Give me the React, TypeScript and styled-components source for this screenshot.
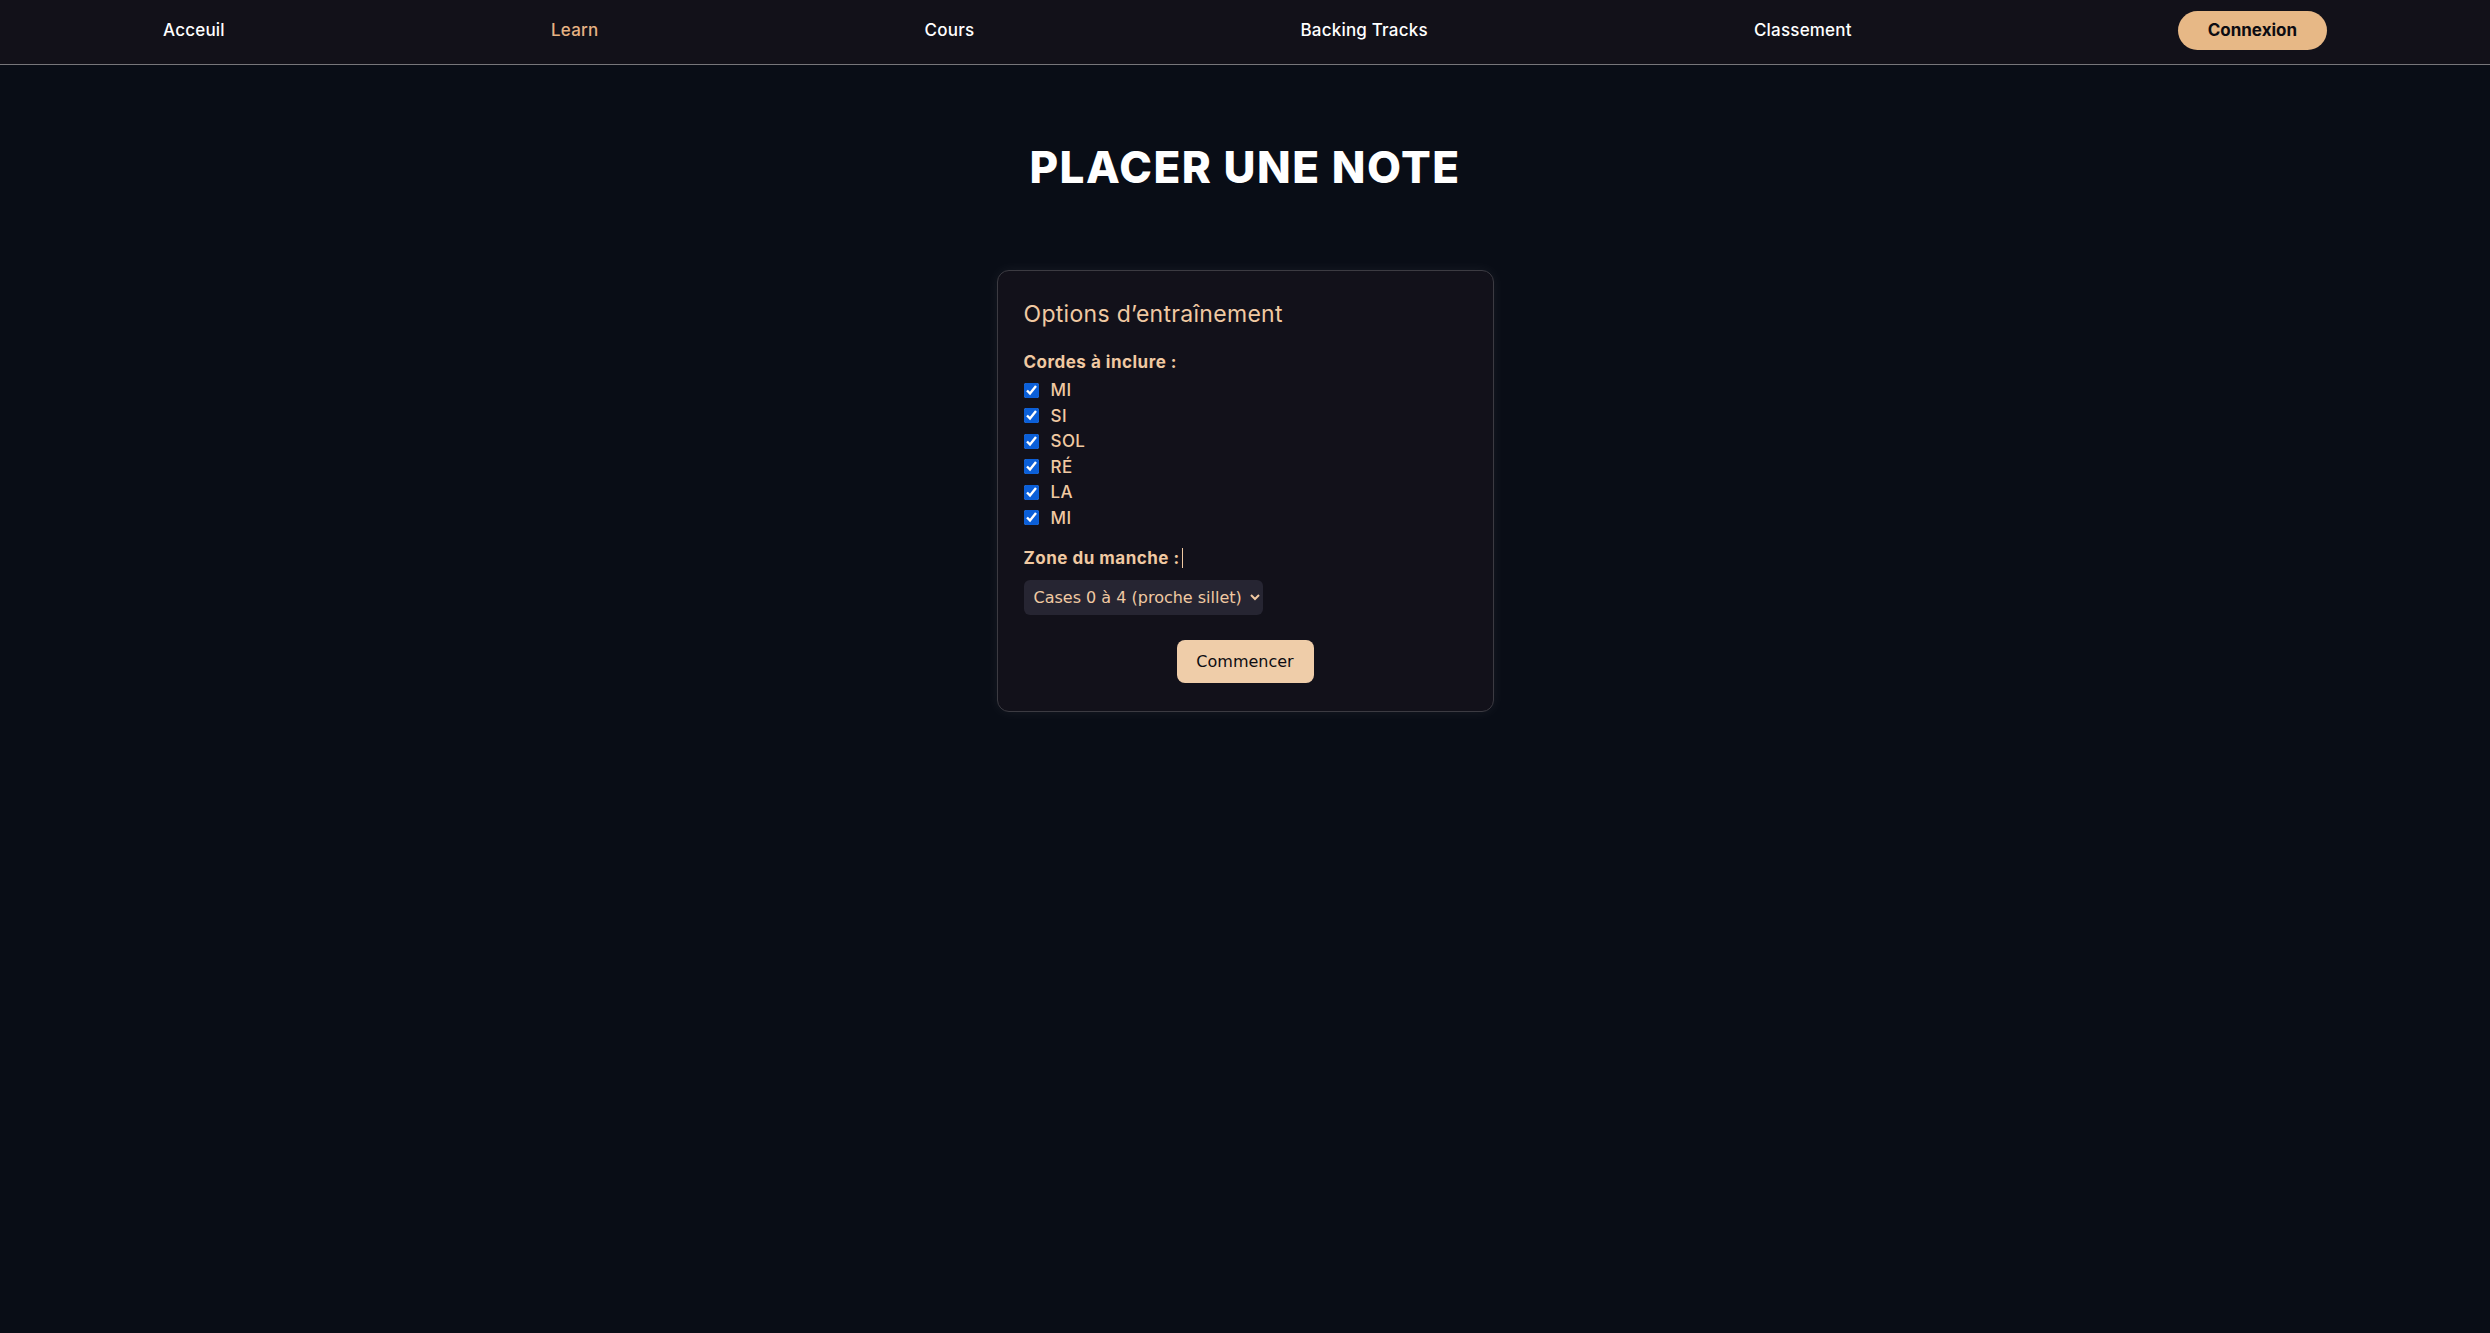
import React, { useState } from 'react'
import styled, { createGlobalStyle } from 'styled-components'

const GlobalStyle = createGlobalStyle`
  html, body {
    margin: 0;
    padding: 0;
    background: #090d16;
    min-height: 100vh;
  }
  body {
    font-family: Inter, 'Noto Sans', sans-serif;
    color: #fff;
  }
  * { box-sizing: border-box; }
`

const Page = styled.div`
  min-height: 100vh;
  display: flex;
  flex-direction: column;
`

const NavBar = styled.nav`
  height: 65px;
  background: #121119;
  border-bottom: 1px solid #77767a;
  display: flex;
  align-items: center;
  justify-content: space-around;
  padding-bottom: 4px;
`

const NavLink = styled.a<{ $active?: boolean }>`
  font-size: 17px;
  font-weight: 500;
  letter-spacing: 0.2px;
  color: ${p => (p.$active ? '#e6b283' : '#ffffff')};
  text-decoration: none;
  cursor: pointer;
`

const LoginButton = styled.button`
  height: 39px;
  width: 149px;
  border: none;
  border-radius: 20px;
  background: #e7b886;
  color: #0d0c12;
  font-family: Inter, 'Noto Sans', sans-serif;
  font-size: 17px;
  font-weight: 700;
  cursor: pointer;
`

const Main = styled.main`
  display: flex;
  flex-direction: column;
  align-items: center;
`

const Title = styled.h1`
  margin: 76px 0 0;
  font-size: 44px;
  font-weight: 800;
  letter-spacing: 1.5px;
  color: #fff;
  line-height: 1.2;
`

const Card = styled.section`
  margin-top: 76px;
  width: 497px;
  background: #12111a;
  border: 1px solid #3c3b42;
  border-radius: 12px;
  box-shadow: 0 0 14px rgba(255, 255, 255, 0.06);
  padding: 29px 26px 28px;
  display: flex;
  flex-direction: column;
`

const CardTitle = styled.h2`
  margin: 0 0 22px;
  font-size: 23px;
  font-weight: 400;
  letter-spacing: 0.3px;
  color: #f0c9a2;
  line-height: 1.3;
`

const GroupLabel = styled.div`
  font-size: 17px;
  font-weight: 700;
  letter-spacing: 0.5px;
  color: #f0c9a2;
  margin-bottom: 6px;
`

const CheckList = styled.div`
  display: flex;
  flex-direction: column;
  margin-bottom: 17px;
`

const CheckRow = styled.label`
  display: flex;
  align-items: center;
  gap: 12px;
  height: 25.5px;
  font-size: 17px;
  font-weight: 500;
  letter-spacing: 0.4px;
  color: #f0c9a2;
  cursor: pointer;
`

const CheckBox = styled.input`
  width: 15px;
  height: 15px;
  margin: 0;
  accent-color: #0b5fd8;
`

const Caret = styled.span`
  display: inline-block;
  width: 1px;
  height: 20px;
  margin-left: 2px;
  vertical-align: -4px;
  background: #f0c9a2;
`

const Select = styled.select`
  margin-top: 6px;
  align-self: flex-start;
  width: 239px;
  height: 35px;
  border: none;
  border-radius: 6px;
  background: #262532;
  color: #f0c9a2;
  font-family: 'DejaVu Sans', 'Open Sans', sans-serif;
  font-size: 16px;
  padding: 0 6px;
  outline: none;
`

const StartButton = styled.button`
  margin-top: 25px;
  align-self: center;
  width: 137px;
  height: 43px;
  border: none;
  border-radius: 8px;
  background: #efcda9;
  color: #0d0c12;
  font-family: 'DejaVu Sans', 'Open Sans', sans-serif;
  font-size: 16px;
  cursor: pointer;
`

const strings = ['MI', 'SI', 'SOL', 'RÉ', 'LA', 'MI']

export default function App() {
  const [checked, setChecked] = useState<boolean[]>(strings.map(() => true))

  return (
    <Page>
      <GlobalStyle />
      <NavBar>
        <NavLink>Acceuil</NavLink>
        <NavLink $active>Learn</NavLink>
        <NavLink>Cours</NavLink>
        <NavLink>Backing Tracks</NavLink>
        <NavLink>Classement</NavLink>
        <LoginButton>Connexion</LoginButton>
      </NavBar>
      <Main>
        <Title>PLACER UNE NOTE</Title>
        <Card>
          <CardTitle>Options d’entraînement</CardTitle>
          <GroupLabel>Cordes à inclure :</GroupLabel>
          <CheckList>
            {strings.map((s, i) => (
              <CheckRow key={i}>
                <CheckBox
                  type="checkbox"
                  checked={checked[i]}
                  onChange={() => setChecked(c => c.map((v, j) => (j === i ? !v : v)))}
                />
                {s}
              </CheckRow>
            ))}
          </CheckList>
          <GroupLabel>
            Zone du manche :<Caret />
          </GroupLabel>
          <Select defaultValue="0-4">
            <option value="0-4">Cases 0 à 4 (proche sillet)</option>
            <option value="5-8">Cases 5 à 8</option>
            <option value="9-12">Cases 9 à 12</option>
          </Select>
          <StartButton>Commencer</StartButton>
        </Card>
      </Main>
    </Page>
  )
}
